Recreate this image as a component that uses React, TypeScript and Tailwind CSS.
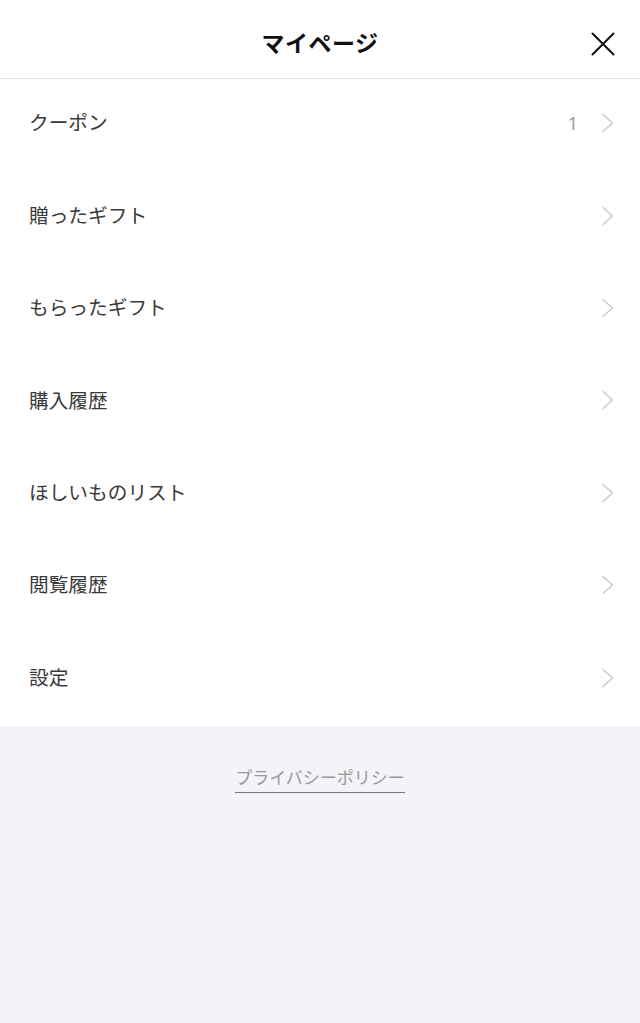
import React from "react";

const items: { label: string; count?: string }[] = [
  { label: "クーポン", count: "1" },
  { label: "贈ったギフト" },
  { label: "もらったギフト" },
  { label: "購入履歴" },
  { label: "ほしいものリスト" },
  { label: "閲覧履歴" },
  { label: "設定" },
];

function Chevron() {
  return (
    <svg width="14" height="20" viewBox="0 0 14 20" fill="none">
      <path d="M2 1.5 L11.5 10 L2 18.5" stroke="#c8c8c8" strokeWidth="1.4" strokeLinecap="round" strokeLinejoin="round" />
    </svg>
  );
}

export default function App() {
  return (
    <div
      className="w-[640px] h-[1023px] flex flex-col bg-[#f3f4f8]"
      style={{ fontFamily: '"Noto Sans CJK JP", "Noto Sans", sans-serif' }}
    >
      <header className="relative h-[79px] shrink-0 bg-white border-b border-[#e4e4e6] flex items-center justify-center">
        <h1 className="text-[23px] font-bold text-[#111] tracking-[0.5px] leading-none mt-[6px]">マイページ</h1>
        <button className="absolute right-[25px] top-[32px] w-[24px] h-[24px] flex items-center justify-center">
          <svg width="24" height="24" viewBox="0 0 24 24" fill="none">
            <path d="M1.5 1.5 L22.5 22.5 M22.5 1.5 L1.5 22.5" stroke="#111" strokeWidth="2" strokeLinecap="round" />
          </svg>
        </button>
      </header>
      <ul className="bg-white shrink-0">
        {items.map((it) => (
          <li key={it.label} className="h-[92.4px] flex items-center pl-[29px] pr-[25px]">
            <span className="flex-1 text-[19.7px] text-[#3a3a3a] leading-none -mt-[6px]">{it.label}</span>
            {it.count && (
              <span className="text-[18px] text-[#999] mr-[23px] leading-none -mt-[4px]" style={{ fontFamily: '"Noto Sans", sans-serif' }}>
                {it.count}
              </span>
            )}
            <span className="-mt-[4px] flex">
              <Chevron />
            </span>
          </li>
        ))}
      </ul>
      <div className="flex justify-center pt-[42px]">
        <a className="text-[17px] text-[#999] leading-none pb-[7px] border-b-[1.5px] border-[#777]">
          プライバシーポリシー
        </a>
      </div>
    </div>
  );
}
